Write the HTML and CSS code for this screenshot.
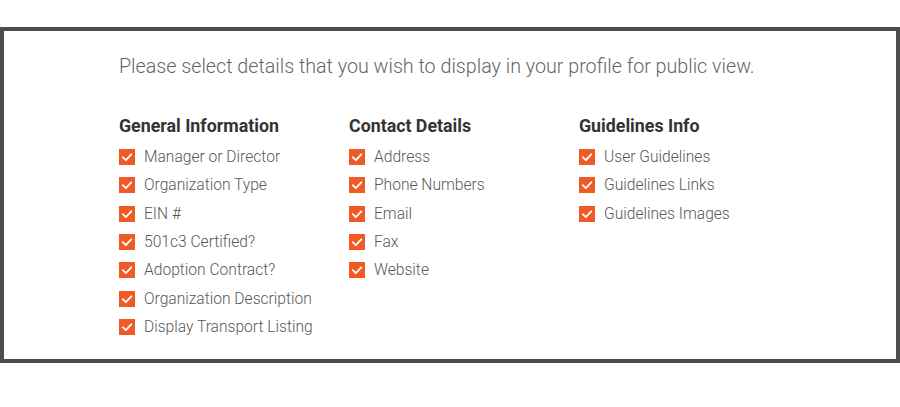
FILE: index.html
```html
<!DOCTYPE html>
<html lang="en">
<head>
<meta charset="utf-8">
<title>Profile visibility</title>
<link rel="stylesheet" href="styles.css">
</head>
<body>
<div class="panel">
  <p class="intro">Please select details that you wish to display in your profile for public view.</p>
  <div class="groups">
    <div class="group">
      <h3 class="group-title">General Information</h3>
      <label class="item"><span class="box"><svg viewBox="0 0 16 16"><path d="M3.8 8.2 L6.8 11.1 L12.3 5.3"/></svg></span>Manager or Director</label>
      <label class="item"><span class="box"><svg viewBox="0 0 16 16"><path d="M3.8 8.2 L6.8 11.1 L12.3 5.3"/></svg></span>Organization Type</label>
      <label class="item"><span class="box"><svg viewBox="0 0 16 16"><path d="M3.8 8.2 L6.8 11.1 L12.3 5.3"/></svg></span>EIN #</label>
      <label class="item"><span class="box"><svg viewBox="0 0 16 16"><path d="M3.8 8.2 L6.8 11.1 L12.3 5.3"/></svg></span>501c3 Certified?</label>
      <label class="item"><span class="box"><svg viewBox="0 0 16 16"><path d="M3.8 8.2 L6.8 11.1 L12.3 5.3"/></svg></span>Adoption Contract?</label>
      <label class="item"><span class="box"><svg viewBox="0 0 16 16"><path d="M3.8 8.2 L6.8 11.1 L12.3 5.3"/></svg></span>Organization Description</label>
      <label class="item"><span class="box"><svg viewBox="0 0 16 16"><path d="M3.8 8.2 L6.8 11.1 L12.3 5.3"/></svg></span>Display Transport Listing</label>
    </div>
    <div class="group">
      <h3 class="group-title">Contact Details</h3>
      <label class="item"><span class="box"><svg viewBox="0 0 16 16"><path d="M3.8 8.2 L6.8 11.1 L12.3 5.3"/></svg></span>Address</label>
      <label class="item"><span class="box"><svg viewBox="0 0 16 16"><path d="M3.8 8.2 L6.8 11.1 L12.3 5.3"/></svg></span>Phone Numbers</label>
      <label class="item"><span class="box"><svg viewBox="0 0 16 16"><path d="M3.8 8.2 L6.8 11.1 L12.3 5.3"/></svg></span>Email</label>
      <label class="item"><span class="box"><svg viewBox="0 0 16 16"><path d="M3.8 8.2 L6.8 11.1 L12.3 5.3"/></svg></span>Fax</label>
      <label class="item"><span class="box"><svg viewBox="0 0 16 16"><path d="M3.8 8.2 L6.8 11.1 L12.3 5.3"/></svg></span>Website</label>
    </div>
    <div class="group">
      <h3 class="group-title">Guidelines Info</h3>
      <label class="item"><span class="box"><svg viewBox="0 0 16 16"><path d="M3.8 8.2 L6.8 11.1 L12.3 5.3"/></svg></span>User Guidelines</label>
      <label class="item"><span class="box"><svg viewBox="0 0 16 16"><path d="M3.8 8.2 L6.8 11.1 L12.3 5.3"/></svg></span>Guidelines Links</label>
      <label class="item"><span class="box"><svg viewBox="0 0 16 16"><path d="M3.8 8.2 L6.8 11.1 L12.3 5.3"/></svg></span>Guidelines Images</label>
    </div>
  </div>
</div>
</body>
</html>
```
FILE: styles.css
```css
html, body {
  margin: 0;
  padding: 0;
  background: #ffffff;
}
body {
  font-family: Roboto, "Liberation Sans", sans-serif;
  padding-top: 27px;
}
.panel {
  box-sizing: border-box;
  width: 900px;
  height: 336px;
  border: 4px solid #4d4d4d;
  padding: 0 0 0 115px;
}
.intro {
  margin: 0;
  padding-top: 20px;
  font-size: 19.7px;
  font-weight: 300;
  color: #666666;
  line-height: 32px;
}
.groups {
  display: flex;
  margin-top: 31px;
}
.group {
  width: 230px;
  display: flex;
  flex-direction: column;
}
.group-title {
  margin: 0 0 5px 0;
  font-size: 17.8px;
  font-weight: 700;
  color: #333333;
  line-height: 24px;
}
.item {
  display: flex;
  align-items: center;
  height: 28.33px;
  font-size: 15.6px;
  font-weight: 300;
  color: #585858;
}
.box {
  width: 16px;
  height: 16px;
  background: #f05a24;
  margin-right: 9px;
  flex: none;
  display: flex;
}
.box svg {
  width: 16px;
  height: 16px;
}
.box path {
  fill: none;
  stroke: #ffffff;
  stroke-width: 1.8;
  stroke-linecap: round;
  stroke-linejoin: round;
}
```
